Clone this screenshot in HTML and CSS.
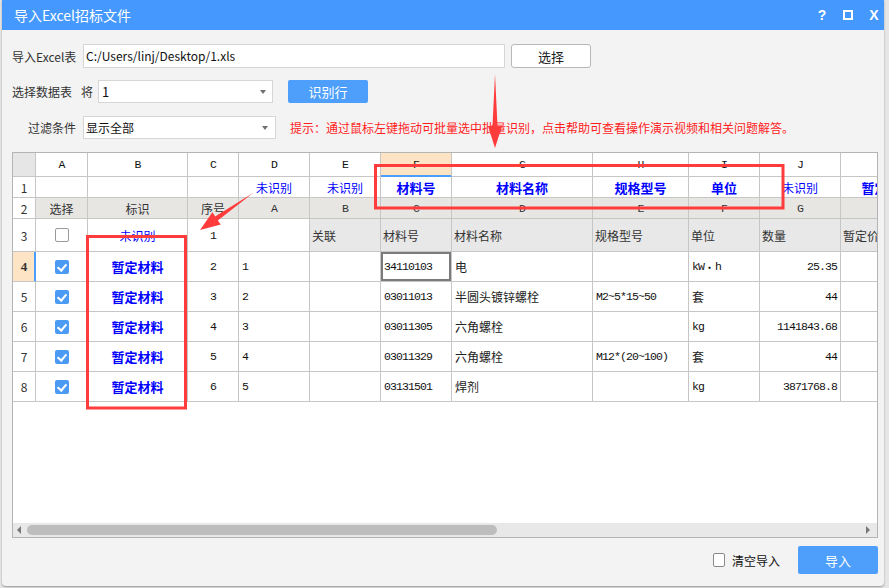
FILE: index.html
```html
<!DOCTYPE html>
<html>
<head>
<meta charset="utf-8">
<title>导入Excel招标文件</title>
<link rel="stylesheet" href="styles.css">
</head>
<body>
<div class="dialog">
  <div class="titlebar">
    <span class="title">导入Excel招标文件</span>
    <div class="win-btns">
      <span class="wb">?</span>
      <span class="wb"><svg width="10" height="10" viewBox="0 0 10 10"><rect x="1" y="1" width="8" height="8" fill="none" stroke="#fff" stroke-width="2"/></svg></span>
      <span class="wb">X</span>
    </div>
  </div>
  <div class="content">
    <div class="form-row row1">
      <label class="lbl">导入Excel表</label>
      <div class="input">C:/Users/linj/Desktop/1.xls</div>
      <button class="btn">选择</button>
    </div>
    <div class="form-row row2">
      <label class="lbl2">选择数据表</label>
      <span class="jiang">将</span>
      <div class="select s1"><span>1</span><i class="caret"></i></div>
      <button class="btn primary">识别行</button>
    </div>
    <div class="form-row row3">
      <label class="lbl lbl-r">过滤条件</label>
      <div class="select s2"><span>显示全部</span><i class="caret"></i></div>
      <span class="hint">提示：通过鼠标左键拖动可批量选中批量识别，点击帮助可查看操作演示视频和相关问题解答。</span>
    </div>
    <div class="grid-wrap">
      <div class="grid-scroll">
        <div class="g">
          <div class="c corner"></div>
          <div class="c mono">A</div>
          <div class="c mono">B</div>
          <div class="c mono">C</div>
          <div class="c mono">D</div>
          <div class="c mono">E</div>
          <div class="c mono colsel">F</div>
          <div class="c mono">G</div>
          <div class="c mono">H</div>
          <div class="c mono">I</div>
          <div class="c mono">J</div>
          <div class="c mono">K</div>

          <div class="c rh">1</div>
          <div class="c"></div>
          <div class="c"></div>
          <div class="c"></div>
          <div class="c blue">未识别</div>
          <div class="c blue">未识别</div>
          <div class="c bb">材料号</div>
          <div class="c bb">材料名称</div>
          <div class="c bb">规格型号</div>
          <div class="c bb">单位</div>
          <div class="c blue">未识别</div>
          <div class="c bb">暂定价</div>

          <div class="c rh">2</div>
          <div class="c g2">选择</div>
          <div class="c g2">标识</div>
          <div class="c g2">序号</div>
          <div class="c g2 mono">A</div>
          <div class="c g2 mono">B</div>
          <div class="c g2 mono">C</div>
          <div class="c g2 mono">D</div>
          <div class="c g2 mono">E</div>
          <div class="c g2 mono">F</div>
          <div class="c g2 mono">G</div>
          <div class="c g2 mono">H</div>

          <div class="c rh">3</div>
          <div class="c"><span class="cb"></span></div>
          <div class="c blue">未识别</div>
          <div class="c mono">1</div>
          <div class="c"></div>
          <div class="c g3 l">关联</div>
          <div class="c g3 l">材料号</div>
          <div class="c g3 l">材料名称</div>
          <div class="c g3 l">规格型号</div>
          <div class="c g3 l">单位</div>
          <div class="c g3 l">数量</div>
          <div class="c g3 l">暂定价</div>

          <div class="c rh rowsel">4</div>
          <div class="c"><span class="cb on"></span></div>
          <div class="c bb">暂定材料</div>
          <div class="c mono">2</div>
          <div class="c mono l">1</div>
          <div class="c"></div>
          <div class="c mono l cellsel">34110103</div>
          <div class="c l">电</div>
          <div class="c"></div>
          <div class="c mono l">kW<span class="dot">・</span>h</div>
          <div class="c mono r">25.35</div>
          <div class="c"></div>

          <div class="c rh">5</div>
          <div class="c"><span class="cb on"></span></div>
          <div class="c bb">暂定材料</div>
          <div class="c mono">3</div>
          <div class="c mono l">2</div>
          <div class="c"></div>
          <div class="c mono l">03011013</div>
          <div class="c l">半圆头镀锌螺栓</div>
          <div class="c mono l">M2~5*15~50</div>
          <div class="c l">套</div>
          <div class="c mono r">44</div>
          <div class="c"></div>

          <div class="c rh">6</div>
          <div class="c"><span class="cb on"></span></div>
          <div class="c bb">暂定材料</div>
          <div class="c mono">4</div>
          <div class="c mono l">3</div>
          <div class="c"></div>
          <div class="c mono l">03011305</div>
          <div class="c l">六角螺栓</div>
          <div class="c"></div>
          <div class="c mono l">kg</div>
          <div class="c mono r">1141843.68</div>
          <div class="c"></div>

          <div class="c rh">7</div>
          <div class="c"><span class="cb on"></span></div>
          <div class="c bb">暂定材料</div>
          <div class="c mono">5</div>
          <div class="c mono l">4</div>
          <div class="c"></div>
          <div class="c mono l">03011329</div>
          <div class="c l">六角螺栓</div>
          <div class="c mono l">M12*(20~100)</div>
          <div class="c l">套</div>
          <div class="c mono r">44</div>
          <div class="c"></div>

          <div class="c rh">8</div>
          <div class="c"><span class="cb on"></span></div>
          <div class="c bb">暂定材料</div>
          <div class="c mono">6</div>
          <div class="c mono l">5</div>
          <div class="c"></div>
          <div class="c mono l">03131501</div>
          <div class="c l">焊剂</div>
          <div class="c"></div>
          <div class="c mono l">kg</div>
          <div class="c mono r">3871768.8</div>
          <div class="c"></div>
        </div>
      </div>
      <div class="hscroll">
        <i class="arr-l"></i>
        <span class="thumb"></span>
        <span class="spacer"></span>
        <i class="arr-r"></i>
      </div>
    </div>
    <div class="footer">
      <span class="cb2"></span>
      <span class="clear-lbl">清空导入</span>
      <button class="btn primary big">导入</button>
    </div>
  </div>
</div>
<svg class="annot" width="889" height="588" viewBox="0 0 889 588">
  <rect x="375.5" y="165.5" width="407.5" height="42.5" fill="none" stroke="#ff3b3b" stroke-width="3"/>
  <rect x="87.5" y="236.5" width="98" height="171.5" fill="none" stroke="#ff3b3b" stroke-width="3"/>
  <polygon points="495,74 497.5,126 502,126 495,148 488,126 492.5,126" fill="#ff3b3b"/>
  <polygon points="253,193 217.8,220.5 220.8,224.5 200,230 212.4,212.3 215.2,216.4" fill="#ff3b3b"/>
</svg>
</body>
</html>
```

FILE: styles.css
```css
* { box-sizing: border-box; }
html, body { margin: 0; padding: 0; }
body {
  width: 889px;
  height: 588px;
  position: relative;
  overflow: hidden;
  background: #e6e6e6;
  font-family: "Noto Sans CJK SC", "Microsoft YaHei", sans-serif;
  font-size: 12px;
  color: #333;
}
.dialog {
  margin-left: 2px;
  width: 882px;
  height: 586px;
  background: #f3f3f3;
  display: flex;
  flex-direction: column;
  border-radius: 0 0 4px 4px;
  box-shadow: 0 1px 2px rgba(0,0,0,0.35);
}
.titlebar {
  height: 30px;
  flex: none;
  background: #4598fe;
  color: #fff;
  display: flex;
  align-items: center;
  padding: 0 2px 0 12px;
}
.title { flex: 1; font-size: 14px; line-height: 30px; }
.win-btns { display: flex; align-items: center; gap: 10px; }
.wb {
  width: 16px;
  height: 16px;
  display: flex;
  align-items: center;
  justify-content: center;
  font-family: "Liberation Sans", Arial, sans-serif;
  font-weight: bold;
  font-size: 14px;
  color: #fff;
}
.content {
  padding: 14px 6px 0 10px;
  display: flex;
  flex-direction: column;
}
.form-row { display: flex; align-items: center; }
.row1 { height: 24px; }
.row2 { height: 23px; margin-top: 12px; }
.row3 { height: 23px; margin-top: 13px; }
.lbl { width: 71px; flex: none; }
.lbl-r { text-align: right; padding-right: 7px; }
.lbl2 { width: 60px; flex: none; }
.jiang { margin-left: 9px; }
.input {
  width: 422px;
  height: 24px;
  background: #fff;
  border: 1px solid #d6d6d6;
  padding-left: 2px;
  line-height: 22px;
  color: #111;
  font-size: 12px;
}
.btn {
  margin-left: 6px;
  width: 80px;
  height: 24px;
  border: 1px solid #b8b8b8;
  border-radius: 3px;
  background: #fff;
  font-family: "Noto Sans CJK SC", sans-serif;
  font-size: 13px;
  color: #222;
  padding: 0;
}
.btn.primary {
  background: #4e9ffc;
  border: none;
  border-radius: 2px;
  color: #fff;
}
.row2 .btn { margin-left: 15px; height: 23px; }
.select {
  height: 23px;
  background: #fff;
  border: 1px solid #d6d6d6;
  display: flex;
  align-items: center;
  justify-content: space-between;
  color: #111;
}
.s1 { width: 175px; margin-left: 5px; padding: 0 6px 0 3px; font-size: 13px; }
.s2 { width: 193px; padding: 0 7px 0 2px; }
.caret {
  width: 0;
  height: 0;
  border-left: 3px solid transparent;
  border-right: 3px solid transparent;
  border-top: 4px solid #707070;
}
.hint {
  margin-left: 14px;
  color: #ff1e1e;
  font-size: 12px;
  letter-spacing: 0;
  white-space: nowrap;
}
.grid-wrap {
  margin-top: 13px;
  width: 866px;
  height: 386px;
  border: 1px solid #b4b4b4;
  background: #fff;
  display: flex;
  flex-direction: column;
}
.grid-scroll { flex: 1; overflow: hidden; }
.g {
  display: grid;
  grid-template-columns: 23px 52px 100px 51px 71px 71px 71px 141px 96px 71px 81px 81px;
  grid-template-rows: 24px 21px 21px 33px repeat(5, 30px);
  width: max-content;
}
.c {
  border-right: 1px solid #c6c6c6;
  border-bottom: 1px solid #c6c6c6;
  display: flex;
  align-items: center;
  justify-content: center;
  white-space: nowrap;
  overflow: hidden;
  padding: 0 3px;
  background: #fff;
  font-size: 12px;
  color: #222;
}
.l { justify-content: flex-start; }
.r { justify-content: flex-end; }
.mono {
  font-family: "Liberation Mono", "DejaVu Sans Mono", monospace;
  font-size: 11.5px;
  letter-spacing: -0.9px;
  color: #111;
}
.dot { font-family: "Noto Sans CJK SC", sans-serif; font-size: 11px; letter-spacing: 0; }
.corner { background: #e6e6e6; }
.colsel {
  background: #fde4c4;
  border-bottom-color: #4a9eff;
  box-shadow: inset 0 -1px 0 #4a9eff;
}
.rh { padding: 0; color: #333; }
.rowsel {
  background: #fde4c4;
  border-right-color: #4a9eff;
  box-shadow: inset -1px 0 0 #4a9eff;
  font-weight: bold;
  font-family: "Liberation Serif", serif;
  font-size: 13px;
}
.cellsel { box-shadow: inset 0 0 0 2px #7b7b7b; }
.g2 { background: #e7e6e3; color: #333; }
.g3 { background: #e8e8e8; color: #333; padding-left: 2px; }
.blue { color: #0000ff; }
.bb { color: #0000ff; font-weight: bold; font-size: 13px; }
.cb {
  width: 14px;
  height: 14px;
  border: 1px solid #9a9a9a;
  border-radius: 2px;
  background: #fff;
  position: relative;
}
.cb.on {
  border: none;
  background: #4b9bf4;
}
.cb.on::after {
  content: "";
  position: absolute;
  left: 4px;
  top: 2px;
  width: 4px;
  height: 7px;
  border-right: 2px solid #fff;
  border-bottom: 2px solid #fff;
  transform: rotate(40deg);
}
.hscroll {
  height: 14px;
  flex: none;
  background: #e8e8e8;
  display: flex;
  align-items: center;
  padding: 0 7px 0 4px;
}
.arr-l {
  width: 0; height: 0;
  border-top: 4px solid transparent;
  border-bottom: 4px solid transparent;
  border-right: 4px solid #777;
}
.arr-r {
  width: 0; height: 0;
  border-top: 4px solid transparent;
  border-bottom: 4px solid transparent;
  border-left: 4px solid #777;
}
.thumb {
  margin-left: 6px;
  width: 470px;
  height: 10px;
  border-radius: 5px;
  background: #bdbdbd;
}
.spacer { flex: 1; }
.footer {
  margin-top: 8px;
  height: 28px;
  display: flex;
  align-items: center;
  justify-content: flex-end;
}
.cb2 {
  width: 12px;
  height: 14px;
  border: 1px solid #8a8a8a;
  border-radius: 2px;
  background: #fff;
}
.clear-lbl { margin-left: 7px; color: #111; font-size: 12px; }
.btn.big { margin-left: 18px; height: 28px; width: 80px; font-size: 13px; }
.annot { position: absolute; left: 0; top: 0; pointer-events: none; }
```
